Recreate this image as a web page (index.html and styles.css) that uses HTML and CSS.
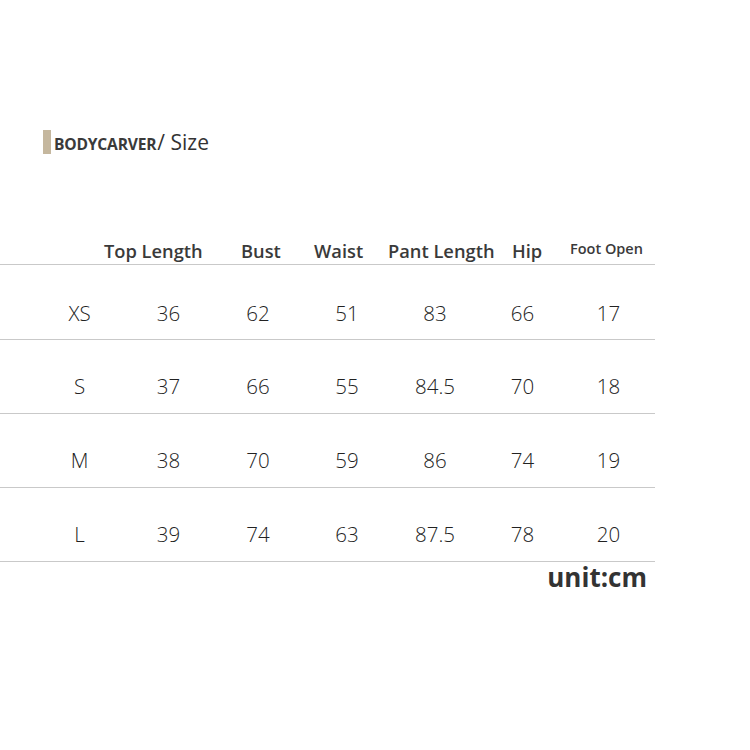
FILE: index.html
```html
<!DOCTYPE html>
<html>
<head>
<meta charset="utf-8">
<link rel="stylesheet" href="styles.css">
</head>
<body>
<div class="page">
  <div class="title">
    <span class="bar"></span>
    <span class="brand">BODYCARVER</span><span class="size">/ Size</span>
  </div>
  <div class="table">
    <div class="head">
      <span>Top Length</span>
      <span>Bust</span>
      <span>Waist</span>
      <span>Pant Length</span>
      <span>Hip</span>
      <span class="small">Foot Open</span>
    </div>
    <div class="row first"><span>XS</span><span>36</span><span>62</span><span>51</span><span>83</span><span>66</span><span>17</span></div>
    <div class="row"><span>S</span><span>37</span><span>66</span><span>55</span><span>84.5</span><span>70</span><span>18</span></div>
    <div class="row"><span>M</span><span>38</span><span>70</span><span>59</span><span>86</span><span>74</span><span>19</span></div>
    <div class="row"><span>L</span><span>39</span><span>74</span><span>63</span><span>87.5</span><span>78</span><span>20</span></div>
    <div class="unit">unit:cm</div>
  </div>
</div>
</body>
</html>
```
FILE: styles.css
```css
html, body {
  margin: 0;
  padding: 0;
  background: #ffffff;
}
body {
  font-family: "Open Sans", "Noto Sans", sans-serif;
  color: #333333;
}
.page {
  width: 750px;
  height: 750px;
  padding-top: 130px;
  box-sizing: border-box;
}
.title {
  display: flex;
  align-items: center;
  height: 24px;
  padding-left: 43px;
}
.bar {
  width: 8px;
  height: 24px;
  background: #c5b79e;
  margin-right: 3px;
}
.brand {
  font-size: 15.6px;
  font-weight: 700;
  color: #3a3a3a;
  line-height: 24px;
  padding-top: 3px;
  letter-spacing: -0.2px;
}
.size {
  font-size: 21px;
  font-weight: 400;
  color: #333;
  line-height: 24px;
  margin-left: 1px;
}
.table {
  width: 655px;
  margin-top: 77px;
}
.head {
  display: grid;
  grid-template-columns: 137px 73px 74px 124px 58px auto;
  padding-left: 104px;
  border-bottom: 1px solid #c9c9c9;
  font-size: 18.3px;
  font-weight: 600;
  color: #3a3a3a;
  line-height: 24px;
  padding-top: 8px;
  box-sizing: border-box;
  height: 34px;
}
.head .small {
  font-size: 14.5px;
  line-height: 20px;
}
.row {
  display: grid;
  grid-template-columns: 89px 89px 90px 88px 88px 87px 85px;
  padding-left: 35px;
  height: 74px;
  box-sizing: border-box;
  padding-top: 34px;
  border-bottom: 1px solid #c9c9c9;
  font-size: 20.5px;
  font-weight: 300;
  line-height: 24px;
  color: #222;
}
.row.first {
  height: 75px;
  padding-top: 36px;
}
.row span {
  text-align: center;
}
.unit {
  text-align: right;
  font-size: 26px;
  font-weight: 700;
  color: #333;
  line-height: 30px;
  padding-right: 8px;
  margin-top: 0px;
}
```
